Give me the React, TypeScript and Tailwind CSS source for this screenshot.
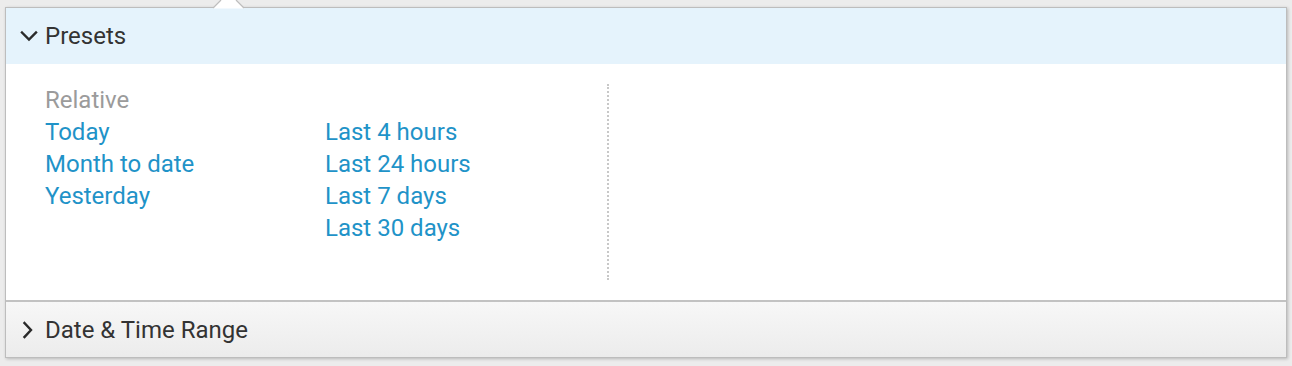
import React from "react";

const linkCls = "block h-[32px] leading-[32px] text-[24px] text-[#1f93c8] whitespace-nowrap";

export default function App() {
  return (
    <div
      className="w-[1292px] h-[366px] bg-[#ececec] pt-[7px] px-[5px] relative"
      style={{ fontFamily: "Roboto, 'Liberation Sans', sans-serif" }}
    >
      <div className="relative border border-[#bdbdbd] bg-white shadow-[1px_1px_3px_rgba(0,0,0,0.22)]">
        {/* header */}
        <div className="h-[56px] bg-[#e5f3fc] flex items-center pl-[14px] gap-[7px]">
          <svg width="18" height="18" viewBox="0 0 18 18" fill="none">
            <polyline points="2,5.5 9,12.5 16,5.5" stroke="#2a2a2a" strokeWidth="2.4" strokeLinecap="square" />
          </svg>
          <span className="text-[24px] text-[#333333] leading-none">Presets</span>
        </div>
        {/* content */}
        <div className="h-[236px] pt-[20px] pl-[39px] flex">
          <div className="w-[564px] h-[196px] flex border-r-2 border-dotted border-[#c8c8c8]">
            <div className="w-[280px]">
              <div className="h-[32px] leading-[32px] text-[24px] text-[#9b9b9b]">Relative</div>
              <a className={linkCls}>Today</a>
              <a className={linkCls}>Month to date</a>
              <a className={linkCls}>Yesterday</a>
            </div>
            <div className="pt-[32px]">
              <a className={linkCls}>Last 4 hours</a>
              <a className={linkCls}>Last 24 hours</a>
              <a className={linkCls}>Last 7 days</a>
              <a className={linkCls}>Last 30 days</a>
            </div>
          </div>
        </div>
        {/* bottom section */}
        <div className="h-[57px] border-t-2 border-[#c2c2c2] bg-gradient-to-b from-[#f7f7f7] to-[#ececec] flex items-center pl-[14px] gap-[7px]">
          <svg width="18" height="18" viewBox="0 0 18 18" fill="none">
            <polyline points="4.5,2 11,9 4.5,16" stroke="#2a2a2a" strokeWidth="2.4" strokeLinecap="square" />
          </svg>
          <span className="text-[24px] text-[#333333] leading-none">Date &amp; Time Range</span>
        </div>
      </div>
      {/* arrow notch */}
      <svg className="absolute left-[213px] top-0" width="32" height="9" viewBox="0 0 32 9">
        <polygon points="0,8.5 8,0 23,0 31,8.5" fill="#ffffff" />
        <polyline points="0,8 8,0" stroke="#bdbdbd" strokeWidth="1.2" fill="none" />
        <polyline points="23,0 31,8" stroke="#bdbdbd" strokeWidth="1.2" fill="none" />
      </svg>
    </div>
  );
}
